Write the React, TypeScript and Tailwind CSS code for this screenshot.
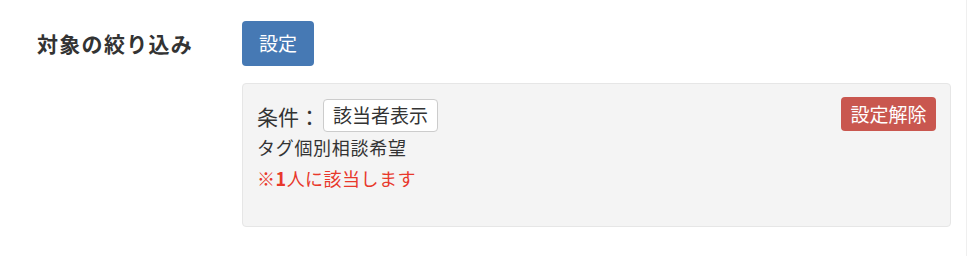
export default function App() {
  return (
    <div
      className="h-[256px] w-[967px] border-r border-[#efefef] bg-white text-[#333333]"
      style={{ fontFamily: '"Noto Sans CJK JP", "Noto Sans", sans-serif' }}
    >
      <div className="flex pt-[21px]">
        {/* label column */}
        <div className="w-[242px] shrink-0 pl-[37px]">
          <div className="flex h-[45px] items-center text-[21px] font-bold tracking-[1.3px] text-[#333333]">
            対象の絞り込み
          </div>
        </div>

        {/* content column */}
        <div className="w-[709px]">
          <button
            type="button"
            className="flex h-[45px] w-[72px] items-center justify-center rounded-[4px] bg-[#4679b4] text-[19px] text-white"
          >
            設定
          </button>

          <div className="mt-[17px] h-[144px] rounded-[4px] border border-[#e6e6e6] bg-[#f4f4f4] pl-[14px] pr-[14px] pt-[13px]">
            <div className="flex items-start justify-between">
              <div className="flex items-center pt-[2px]">
                <span className="text-[21px] leading-[28px]">条件：</span>
                <span className="ml-[3px] flex h-[33px] items-center rounded-[4px] border border-[#cccccc] bg-white px-[9px] text-[19px]">
                  該当者表示
                </span>
              </div>
              <button
                type="button"
                className="flex h-[34px] w-[95px] items-center justify-center rounded-[4px] bg-[#c9574f] text-[19px] text-white"
              >
                設定解除
              </button>
            </div>
            <div className="mt-[2px] text-[18px] leading-[26px] tracking-[0.7px]">タグ個別相談希望</div>
            <div className="mt-[5px] text-[18px] leading-[26px] tracking-[0.5px] text-[#e8382b]">
              ※<span className="font-bold">1</span>人に該当します
            </div>
          </div>
        </div>
      </div>
    </div>
  );
}
